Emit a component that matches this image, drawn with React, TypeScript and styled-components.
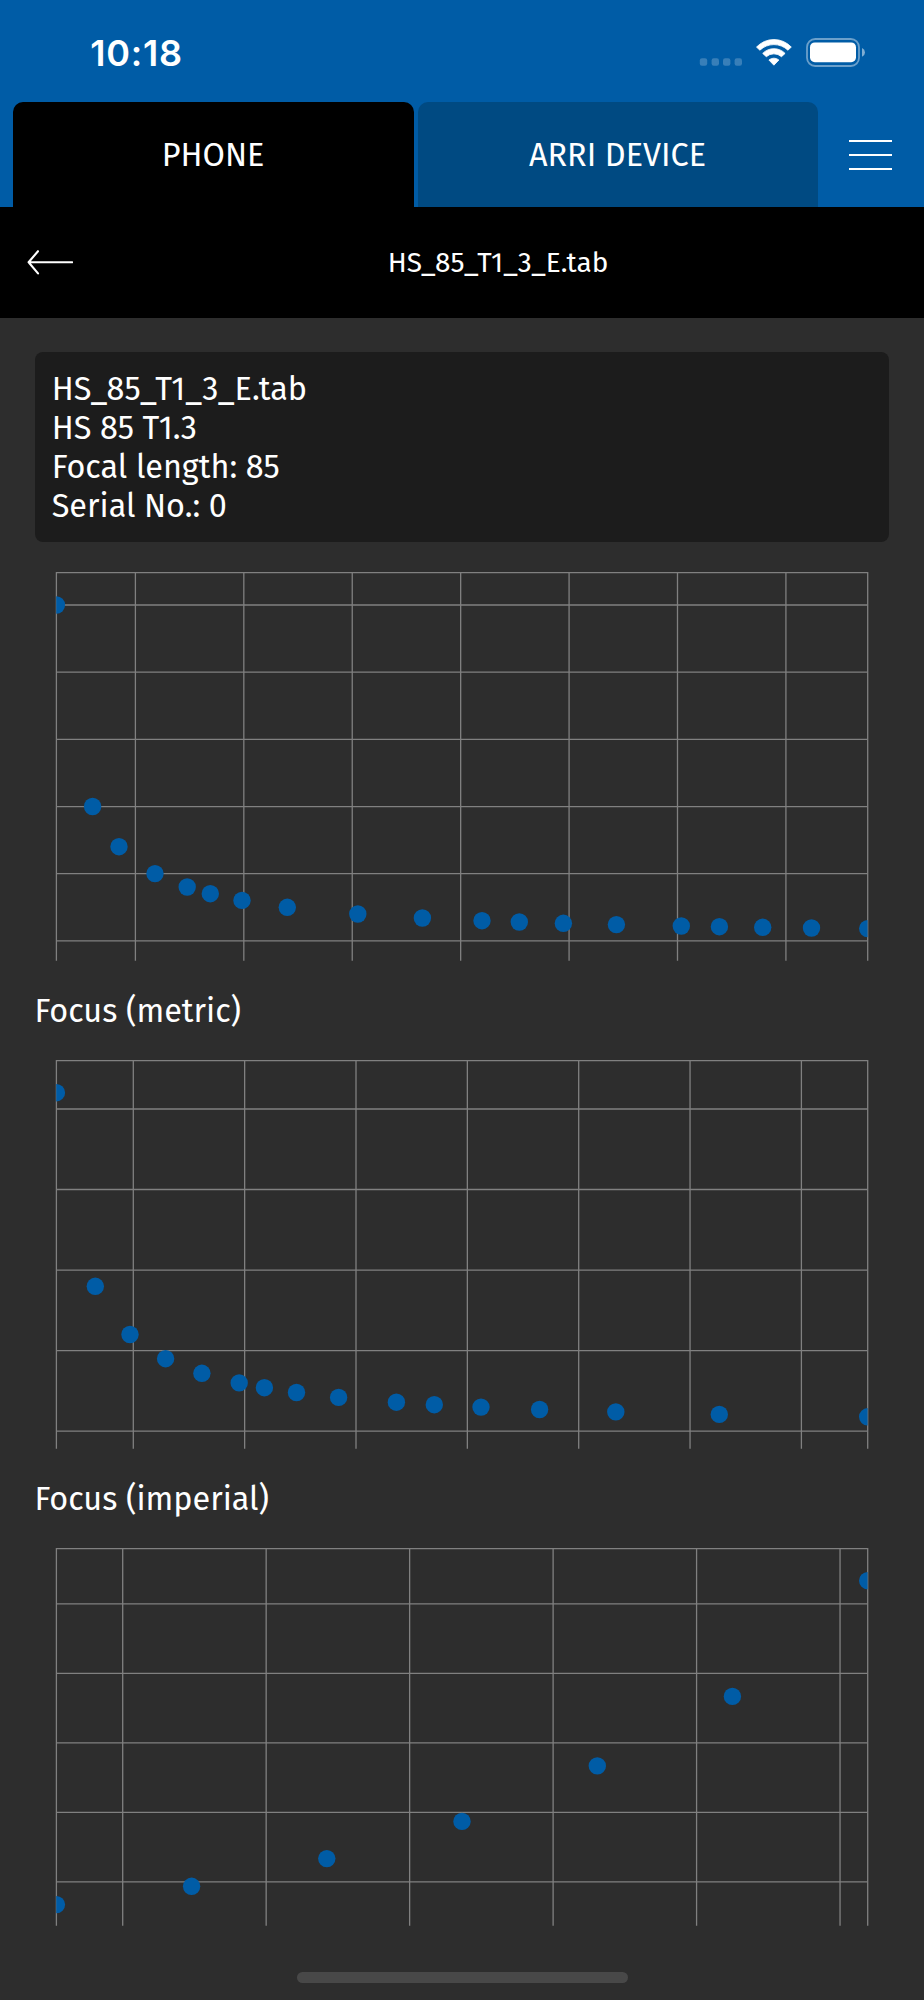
import React from "react";
import styled, { createGlobalStyle } from "styled-components";

const color = {
  brand: "#005ca6",
  brandDim: "#004a82",
  bar: "#000000",
  page: "#2d2d2d",
  card: "#1c1c1c",
  grid: "#808080",
  indicator: "#484848",
  text: "#ffffff",
};

const textFont = `"Fira Sans", "Open Sans", "Noto Sans", sans-serif`;

const GlobalStyle = createGlobalStyle`
  *, *::before, *::after { box-sizing: border-box; }
  body {
    margin: 0;
    background: ${color.page};
    color: ${color.text};
    font-family: ${textFont};
  }
  button { border: 0; padding: 0; background: none; color: inherit; }
`;

const Screen = styled.div`
  display: flex;
  flex-direction: column;
  width: 924px;
  height: 2000px;
  overflow: hidden;
  background: ${color.page};
`;

const Header = styled.header`
  flex: none;
  height: 207px;
  background: ${color.brand};
`;

const StatusBar = styled.div`
  display: flex;
  align-items: center;
  justify-content: space-between;
  height: 101.5px;
  padding: 4px 58px 0 90.3px;
`;

const Clock = styled.time`
  font-family: Inter, sans-serif;
  font-size: 36px;
  font-weight: 600;
  line-height: 44px;
  letter-spacing: 0.75px;
`;

const StatusIcons = styled.svg`
  display: block;
  width: 167px;
  height: 29px;
  margin-bottom: 1px;
`;

const TabRow = styled.nav`
  display: flex;
  height: 105.5px;
  padding-left: 13px;
`;

const Tab = styled.button<{ $active?: boolean }>`
  width: 401px;
  margin-right: 4px;
  padding: 2.5px 1px 0 0;
  border-radius: 10px 10px 0 0;
  background: ${(p) => (p.$active ? color.bar : color.brandDim)};
  font-family: ${textFont};
  font-size: 32.4px;
  line-height: 39px;
  & + & {
    width: 400px;
    margin-right: 0;
  }
`;

const MenuButton = styled.button`
  display: flex;
  flex-direction: column;
  gap: 12px;
  width: 43.3px;
  height: 30px;
  margin: 38.5px 0 0 31px;
`;

const MenuLine = styled.span`
  height: 2px;
  background: ${color.text};
`;

const TitleBar = styled.div`
  flex: none;
  display: grid;
  grid-template-columns: 73px 1fr;
  align-items: center;
  height: 111px;
  padding-bottom: 1px;
  background: ${color.bar};
`;

const BackButton = styled.button`
  height: 26px;
  padding-left: 26px;
`;

const BackIcon = styled.svg`
  display: block;
  width: 47px;
  height: 26px;
  fill: none;
  stroke: ${color.text};
  stroke-width: 2.1;
  stroke-linecap: round;
  stroke-linejoin: round;
`;

const Title = styled.h1`
  margin: 0;
  padding-right: 1px;
  font-size: 28px;
  font-weight: 400;
  line-height: 33px;
  text-align: center;
`;

const Content = styled.main`
  display: flex;
  flex-direction: column;
  padding: 34px 35px 0;
`;

const InfoCard = styled.section`
  height: 190px;
  padding: 19px 16.7px 0;
  border-radius: 8px;
  background: ${color.card};
`;

const InfoLine = styled.div`
  font-size: 32.4px;
  line-height: 38.9px;
  white-space: nowrap;
`;

const Charts = styled.div`
  display: flex;
  flex-direction: column;
  margin-top: 30px;
`;

const Caption = styled.h2`
  display: flex;
  align-items: center;
  height: 99px;
  margin: 0 0 0 -0.5px;
  padding-top: 2px;
  font-size: 32.4px;
  font-weight: 400;
  line-height: 39px;
`;

const Plot = styled.svg`
  display: block;
  width: 854px;
`;

const HomeIndicator = styled.div`
  align-self: center;
  width: 331px;
  height: 10.5px;
  margin-top: 46px;
  border-radius: 6px;
  background: ${color.indicator};
`;

type Point = [number, number];

interface ChartData {
  caption?: string;
  top: number;
  bottom: number;
  firstX: number;
  stepX: number;
  countX: number;
  firstY: number;
  stepY: number;
  countY: number;
  points: Point[];
}

const LEFT = 56.4;
const RIGHT = 867.7;

const charts: ChartData[] = [
  {
    top: 572, bottom: 961,
    firstX: 135.4, stepX: 108.42, countX: 7,
    firstY: 605, stepY: 67.18, countY: 6,
    points: [
      [56.4, 605], [92.6, 806.5], [119, 846.7], [155, 873.6], [187.2, 887],
      [210.3, 893.7], [242, 900.4], [287.3, 907.3], [357.8, 914], [422.4, 918],
      [482, 920.7], [519.3, 922], [563.4, 923.3], [616.4, 924.6], [681.3, 926],
      [719.4, 926.7], [762.7, 927.3], [811.5, 928], [867.7, 928.6],
    ],
  },
  {
    caption: "Focus (metric)",
    top: 1060, bottom: 1449,
    firstX: 133.3, stepX: 111.35, countX: 7,
    firstY: 1109, stepY: 80.52, countY: 5,
    points: [
      [56.4, 1092.7], [95.3, 1286.3], [130, 1334.5], [165.6, 1358.7],
      [201.9, 1373.3], [239.2, 1382.9], [264.4, 1387.7], [296.5, 1392.5],
      [338.6, 1397.4], [396.4, 1402.2], [434.3, 1404.7], [481, 1407.1],
      [539.6, 1409.5], [615.8, 1411.9], [719.3, 1414.4], [867.7, 1416.8],
    ],
  },
  {
    caption: "Focus (imperial)",
    top: 1548, bottom: 1926,
    firstX: 122.7, stepX: 143.47, countX: 6,
    firstY: 1603.9, stepY: 69.48, countY: 5,
    points: [
      [56.4, 1904.6], [191.6, 1886.3], [326.8, 1858.6], [462, 1821.4],
      [597.3, 1765.9], [732.4, 1696.4], [867.7, 1580.7],
    ],
  },
];

const range = (first: number, step: number, count: number) =>
  Array.from({ length: count }, (_, i) => first + i * step);

function ScatterChart({ data }: { data: ChartData }) {
  const { top, bottom, points } = data;
  const height = bottom - top;
  const clipId = `plot-${top}`;
  const xs = [LEFT, ...range(data.firstX, data.stepX, data.countX), RIGHT];
  const ys = [top + 0.6, ...range(data.firstY, data.stepY, data.countY)];
  return (
    <Plot height={height} viewBox={`35 ${top} 854 ${height}`}>
      <clipPath id={clipId}>
        <rect x={LEFT - 0.2} y={top} width={RIGHT - LEFT + 0.1} height={height} />
      </clipPath>
      <g stroke={color.grid} strokeWidth={1.3}>
        {xs.map((x) => (
          <line key={`x${x}`} x1={x} x2={x} y1={top} y2={bottom - 0.2} />
        ))}
        {ys.map((y) => (
          <line key={`y${y}`} x1={LEFT} x2={RIGHT} y1={y} y2={y} />
        ))}
      </g>
      <g fill={color.brand} clipPath={`url(#${clipId})`}>
        {points.map(([x, y]) => (
          <circle key={x} cx={x} cy={y} r={8.7} />
        ))}
      </g>
    </Plot>
  );
}

function StatusGlyphs() {
  return (
    <StatusIcons viewBox="699 38 167 29" aria-hidden="true">
      <g fill="#fff" fillOpacity={0.22}>
        {[699.8, 711.6, 723, 734.6].map((x) => (
          <rect key={x} x={x} y={58.3} width={7.4} height={7.4} rx={2.2} />
        ))}
      </g>
      <g fill="#fff" stroke="#fff" strokeWidth={0.8} strokeLinejoin="round">
        <path d="M756.5 47.1 A23.7 23.7 0 0 1 791.3 47.1 L787.9 50.2 A20.3 20.3 0 0 0 759.9 50.2 Z" />
        <path d="M762.7 53.4 A15.6 15.6 0 0 1 785.1 53.4 L781.5 56.7 A11.6 11.6 0 0 0 766.3 56.7 Z" />
        <path d="M768.9 60 A7.8 7.8 0 0 1 778.9 60 L773.9 65.2 Z" />
      </g>
      <rect x={807} y={39} width={52} height={27} rx={8.2} fill="none" stroke="#fff" strokeOpacity={0.42} strokeWidth={1.8} />
      <rect x={810} y={42.4} width={46} height={19.8} rx={4.8} fill="#fff" />
      <path d="M862 48 Q865 49.5 865 52.4 Q865 55.3 862 56.8 Z" fill="#fff" fillOpacity={0.5} />
    </StatusIcons>
  );
}

const info = [
  "HS_85_T1_3_E.tab",
  "HS 85 T1.3",
  "Focal length: 85",
  "Serial No.: 0",
];

export default function App() {
  return (
    <Screen>
      <GlobalStyle />
      <Header>
        <StatusBar>
          <Clock>10:18</Clock>
          <StatusGlyphs />
        </StatusBar>
        <TabRow>
          <Tab $active>PHONE</Tab>
          <Tab>ARRI DEVICE</Tab>
          <MenuButton aria-label="Menu">
            <MenuLine />
            <MenuLine />
            <MenuLine />
          </MenuButton>
        </TabRow>
      </Header>
      <TitleBar>
        <BackButton aria-label="Back">
          <BackIcon viewBox="26 249 47 26">
            <path d="M72.2 262.3H28.6M38 251.2L28.6 262.3L38 273.4" />
          </BackIcon>
        </BackButton>
        <Title>HS_85_T1_3_E.tab</Title>
      </TitleBar>
      <Content>
        <InfoCard>
          {info.map((line) => (
            <InfoLine key={line}>{line}</InfoLine>
          ))}
        </InfoCard>
        <Charts>
          {charts.map((chart) => (
            <React.Fragment key={chart.top}>
              {chart.caption && <Caption>{chart.caption}</Caption>}
              <ScatterChart data={chart} />
            </React.Fragment>
          ))}
        </Charts>
        <HomeIndicator />
      </Content>
    </Screen>
  );
}
